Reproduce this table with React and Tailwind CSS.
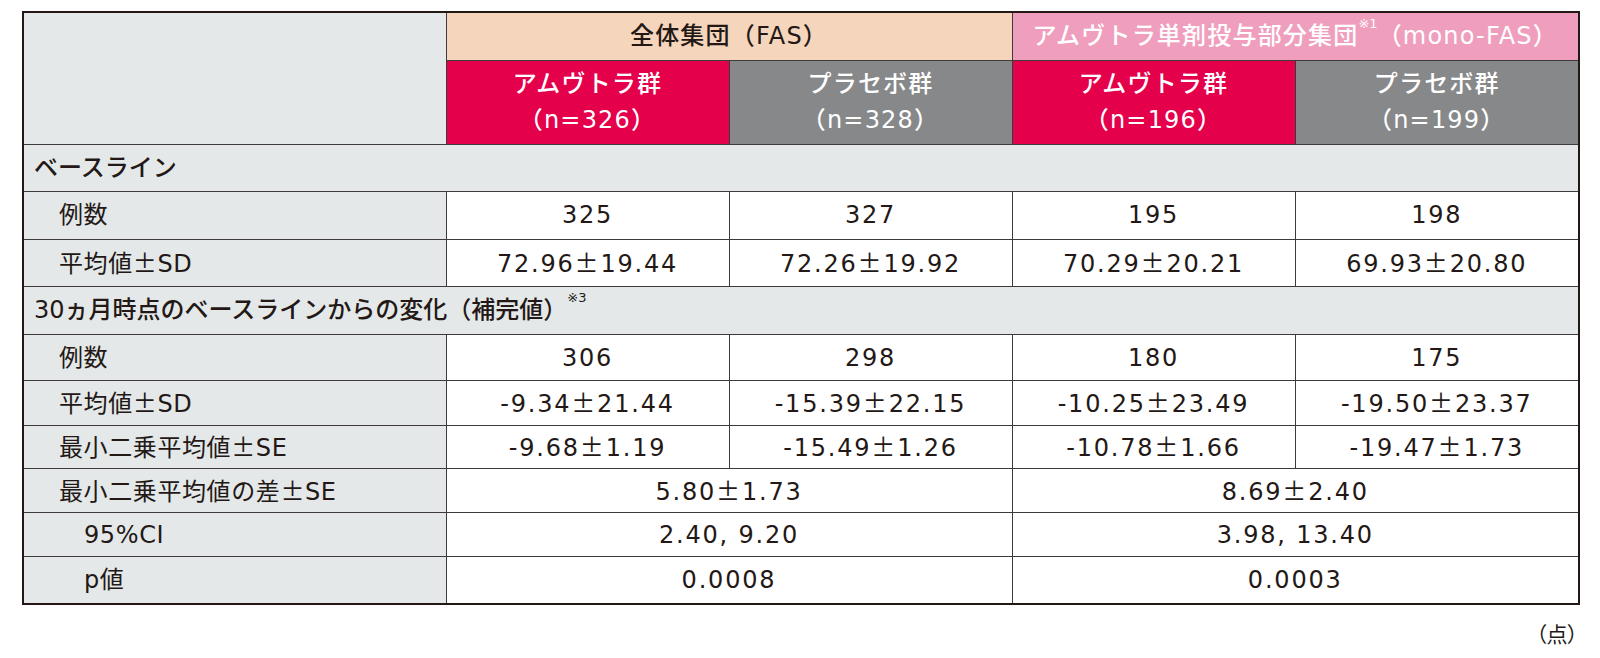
import React from "react";

const rows = [
  { type: "section", h: "h-[47.4px]", label: "ベースライン" },
  { h: "h-[47.6px]", label: "例数", vals: ["325", "327", "195", "198"] },
  { h: "h-[47.4px]", label: "平均値±SD", vals: ["72.96±19.44", "72.26±19.92", "70.29±20.21", "69.93±20.80"] },
  { type: "section", h: "h-[47.6px]", label: "30ヵ月時点のベースラインからの変化（補完値）", note: "※3" },
  { h: "h-[46.7px]", label: "例数", vals: ["306", "298", "180", "175"] },
  { h: "h-[44.3px]", label: "平均値±SD", vals: ["-9.34±21.44", "-15.39±22.15", "-10.25±23.49", "-19.50±23.37"] },
  { h: "h-[43.4px]", label: "最小二乗平均値±SE", vals: ["-9.68±1.19", "-15.49±1.26", "-10.78±1.66", "-19.47±1.73"] },
  { h: "h-[44px]", label: "最小二乗平均値の差±SE", merged: ["5.80±1.73", "8.69±2.40"] },
  { h: "h-[44px]", label: "95%CI", deep: true, merged: ["2.40, 9.20", "3.98, 13.40"] },
  { h: "h-[47px]", label: "p値", deep: true, merged: ["0.0008", "0.0003"] },
];

const cell = "border border-[#3e3a39]";

// ± is set in the Japanese face (full width), like the printed table
function PM({ text }) {
  const parts = text.split("±");
  return parts.map((p, i) => (
    <React.Fragment key={i}>
      {i > 0 && <span className="font-['Noto_Sans_CJK_JP',sans-serif]">±</span>}
      {p}
    </React.Fragment>
  ));
}

function GroupHead({ name, n, color }) {
  return (
    <th className={`${cell} ${color} leading-[36px] font-medium tracking-[1.2px]`}>
      <div>{name}</div>
      <div>{n}</div>
    </th>
  );
}

export default function App() {
  return (
    <div className="w-[1600px] h-[658px] bg-white text-[#231815] font-['DejaVu_Sans','Noto_Sans_CJK_JP',sans-serif]">
      <div className="pt-[11px] pl-[22px] w-[1578px]">
        <table className="border-collapse border-2 border-[#231815] table-fixed w-[1556px] text-[24px] leading-none">
          <colgroup>
            <col className="w-[423px]" />
            <col className="w-[283px]" />
            <col className="w-[283px]" />
            <col className="w-[283px]" />
            <col className="w-[284px]" />
          </colgroup>
          <thead>
            <tr className="h-[48px]">
              <th rowSpan={2} className={`${cell} bg-[#e4e8e9]`}></th>
              <th colSpan={2} className={`${cell} bg-[#f5d5bb] font-medium tracking-[1.2px]`}>
                全体集団（FAS）
              </th>
              <th colSpan={2} className={`${cell} bg-[#ef9ebd] font-medium text-white tracking-[1.2px]`}>
                アムヴトラ単剤投与部分集団
                <sup className="text-[13px] align-[0.75em] tracking-normal">※1</sup>
                （mono-FAS）
              </th>
            </tr>
            <tr className="h-[84.3px] text-white">
              <GroupHead name="アムヴトラ群" n="（n=326）" color="bg-[#e4004b]" />
              <GroupHead name="プラセボ群" n="（n=328）" color="bg-[#87888a]" />
              <GroupHead name="アムヴトラ群" n="（n=196）" color="bg-[#e4004b]" />
              <GroupHead name="プラセボ群" n="（n=199）" color="bg-[#87888a]" />
            </tr>
          </thead>
          <tbody>
            {rows.map((r, i) =>
              r.type === "section" ? (
                <tr key={i} className={r.h}>
                  <td colSpan={5} className={`${cell} bg-[#e4e8e9] pl-[10px] font-medium`}>
                    {r.label}
                    {r.note && <sup className="text-[13px] align-[0.75em]">{r.note}</sup>}
                  </td>
                </tr>
              ) : (
                <tr key={i} className={r.h}>
                  <td className={`${cell} bg-[#e4e8e9] tracking-[0.6px] ${r.deep ? "pl-[60px]" : "pl-[35px]"}`}>
                    <PM text={r.label} />
                  </td>
                  {r.vals &&
                    r.vals.map((v, j) => (
                      <td key={j} className={`${cell} bg-white text-center tracking-[1.8px]`}>
                        <PM text={v} />
                      </td>
                    ))}
                  {r.merged &&
                    r.merged.map((v, j) => (
                      <td key={j} colSpan={2} className={`${cell} bg-white text-center tracking-[1.8px]`}>
                        <PM text={v} />
                      </td>
                    ))}
                </tr>
              )
            )}
          </tbody>
        </table>
        <div className="flex justify-end mt-[18px]">
          <span className="text-[21px] leading-none font-['Noto_Sans_CJK_JP',sans-serif] [font-feature-settings:'palt']">
            （点）
          </span>
        </div>
      </div>
    </div>
  );
}
